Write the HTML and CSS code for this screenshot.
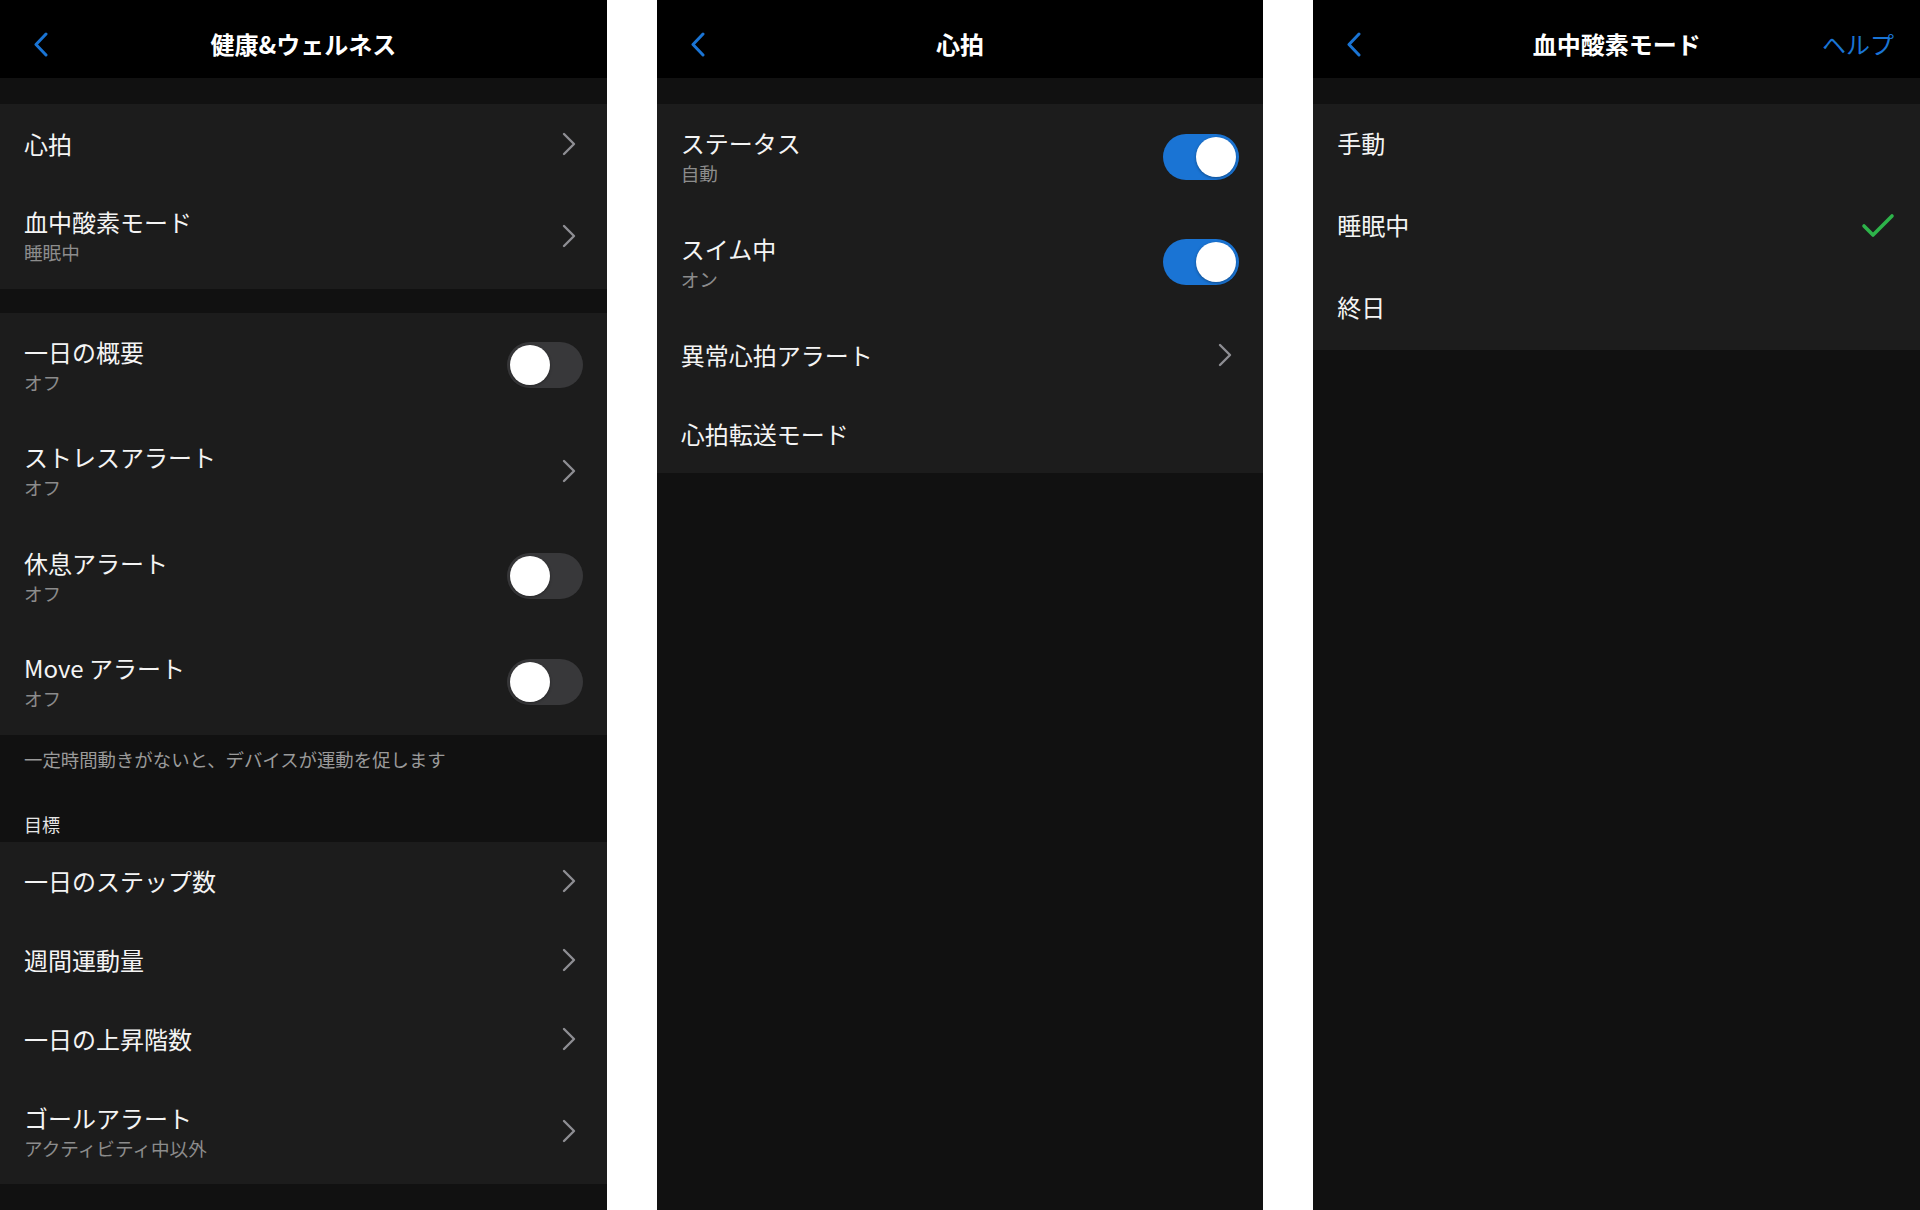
FILE: index.html
```html
<!DOCTYPE html>
<html lang="ja">
<head>
<meta charset="utf-8">
<title>設定</title>
<link rel="stylesheet" href="styles.css">
</head>
<body>
<div class="screens">
  <!-- Panel 1 -->
  <section class="panel">
    <header class="bar">
      <span class="back"><svg width="16" height="25" viewBox="0 0 16 25"><polyline points="13,2 3,12.5 13,23" fill="none" stroke="#1a74d4" stroke-width="3" stroke-linecap="round" stroke-linejoin="round"/></svg></span>
      <h1 class="title">健康&amp;ウェルネス</h1>
      <span class="right"></span>
    </header>
    <div class="spacer"></div>
    <div class="group">
      <div class="row single"><div class="text"><div class="label">心拍</div></div><svg class="chev" width="14" height="24" viewBox="0 0 14 24"><polyline points="2,2 12,12 2,22" fill="none" stroke="#8e8e93" stroke-width="2.4" stroke-linecap="round" stroke-linejoin="round"/></svg></div>
      <div class="row double"><div class="text"><div class="label">血中酸素モード</div><div class="sub">睡眠中</div></div><svg class="chev" width="14" height="24" viewBox="0 0 14 24"><polyline points="2,2 12,12 2,22" fill="none" stroke="#8e8e93" stroke-width="2.4" stroke-linecap="round" stroke-linejoin="round"/></svg></div>
    </div>
    <div class="gap"></div>
    <div class="group">
      <div class="row double"><div class="text"><div class="label">一日の概要</div><div class="sub">オフ</div></div><div class="toggle"><span class="knob"></span></div></div>
      <div class="row double"><div class="text"><div class="label">ストレスアラート</div><div class="sub">オフ</div></div><svg class="chev" width="14" height="24" viewBox="0 0 14 24"><polyline points="2,2 12,12 2,22" fill="none" stroke="#8e8e93" stroke-width="2.4" stroke-linecap="round" stroke-linejoin="round"/></svg></div>
      <div class="row double"><div class="text"><div class="label">休息アラート</div><div class="sub">オフ</div></div><div class="toggle"><span class="knob"></span></div></div>
      <div class="row double"><div class="text"><div class="label">Move アラート</div><div class="sub">オフ</div></div><div class="toggle"><span class="knob"></span></div></div>
    </div>
    <p class="note">一定時間動きがないと、デバイスが運動を促します</p>
    <div class="section-label">目標</div>
    <div class="group">
      <div class="row single"><div class="text"><div class="label">一日のステップ数</div></div><svg class="chev" width="14" height="24" viewBox="0 0 14 24"><polyline points="2,2 12,12 2,22" fill="none" stroke="#8e8e93" stroke-width="2.4" stroke-linecap="round" stroke-linejoin="round"/></svg></div>
      <div class="row single"><div class="text"><div class="label">週間運動量</div></div><svg class="chev" width="14" height="24" viewBox="0 0 14 24"><polyline points="2,2 12,12 2,22" fill="none" stroke="#8e8e93" stroke-width="2.4" stroke-linecap="round" stroke-linejoin="round"/></svg></div>
      <div class="row single"><div class="text"><div class="label">一日の上昇階数</div></div><svg class="chev" width="14" height="24" viewBox="0 0 14 24"><polyline points="2,2 12,12 2,22" fill="none" stroke="#8e8e93" stroke-width="2.4" stroke-linecap="round" stroke-linejoin="round"/></svg></div>
      <div class="row double"><div class="text"><div class="label">ゴールアラート</div><div class="sub">アクティビティ中以外</div></div><svg class="chev" width="14" height="24" viewBox="0 0 14 24"><polyline points="2,2 12,12 2,22" fill="none" stroke="#8e8e93" stroke-width="2.4" stroke-linecap="round" stroke-linejoin="round"/></svg></div>
    </div>
  </section>

  <!-- Panel 2 -->
  <section class="panel">
    <header class="bar">
      <span class="back"><svg width="16" height="25" viewBox="0 0 16 25"><polyline points="13,2 3,12.5 13,23" fill="none" stroke="#1a74d4" stroke-width="3" stroke-linecap="round" stroke-linejoin="round"/></svg></span>
      <h1 class="title">心拍</h1>
      <span class="right"></span>
    </header>
    <div class="spacer"></div>
    <div class="group">
      <div class="row double"><div class="text"><div class="label">ステータス</div><div class="sub">自動</div></div><div class="toggle on"><span class="knob"></span></div></div>
      <div class="row double"><div class="text"><div class="label">スイム中</div><div class="sub">オン</div></div><div class="toggle on"><span class="knob"></span></div></div>
      <div class="row single"><div class="text"><div class="label">異常心拍アラート</div></div><svg class="chev" width="14" height="24" viewBox="0 0 14 24"><polyline points="2,2 12,12 2,22" fill="none" stroke="#8e8e93" stroke-width="2.4" stroke-linecap="round" stroke-linejoin="round"/></svg></div>
      <div class="row single"><div class="text"><div class="label">心拍転送モード</div></div></div>
    </div>
  </section>

  <!-- Panel 3 -->
  <section class="panel">
    <header class="bar">
      <span class="back"><svg width="16" height="25" viewBox="0 0 16 25"><polyline points="13,2 3,12.5 13,23" fill="none" stroke="#1a74d4" stroke-width="3" stroke-linecap="round" stroke-linejoin="round"/></svg></span>
      <h1 class="title">血中酸素モード</h1>
      <span class="right help">ヘルプ</span>
    </header>
    <div class="spacer"></div>
    <div class="group">
      <div class="row option"><div class="text"><div class="label">手動</div></div></div>
      <div class="row option"><div class="text"><div class="label">睡眠中</div></div><svg class="check" width="34" height="28" viewBox="0 0 34 28"><polyline points="3,14 12,23 31,4" fill="none" stroke="#2db34a" stroke-width="3.6" stroke-linecap="round" stroke-linejoin="round"/></svg></div>
      <div class="row option"><div class="text"><div class="label">終日</div></div></div>
    </div>
  </section>
</div>
</body>
</html>
```

FILE: styles.css
```css
html, body {
  margin: 0;
  padding: 0;
  background: #ffffff;
}

body {
  width: 1920px;
  height: 1210px;
  overflow: hidden;
  font-family: "Noto Sans CJK JP", "Noto Sans", sans-serif;
}

.screens {
  display: flex;
  gap: 50px;
  height: 1210px;
}

.panel {
  flex: 1 1 0;
  min-width: 0;
  background: #111111;
  display: flex;
  flex-direction: column;
}

.bar {
  height: 78px;
  box-sizing: border-box;
  background: #000000;
  display: grid;
  grid-template-columns: 1fr auto 1fr;
  align-items: center;
  padding: 10px 26px 0 26px;
  flex: none;
}

.back {
  display: flex;
  align-items: center;
  height: 25px;
  margin-left: 7px;
}

.title {
  margin: 0;
  color: #ffffff;
  font-size: 24px;
  font-weight: 700;
  line-height: 30px;
  white-space: nowrap;
}

.right {
  justify-self: end;
}

.help {
  color: #1a74d4;
  font-size: 24px;
  line-height: 30px;
}

.spacer {
  height: 26px;
  flex: none;
}

.gap {
  height: 24px;
  flex: none;
}

.group {
  background: #1c1c1c;
  flex: none;
}

.row {
  display: flex;
  align-items: center;
  justify-content: space-between;
  padding: 0 24px;
}

.row.single {
  height: 79px;
}

.row.double {
  height: 105.5px;
}

.row.option {
  height: 82px;
  box-sizing: border-box;
  padding-bottom: 4px;
}

.text {
  display: flex;
  flex-direction: column;
  gap: 3px;
}

.label {
  color: #f4f4f4;
  font-size: 24px;
  line-height: 30px;
  white-space: nowrap;
}

.sub {
  color: #8c8c8c;
  font-size: 18.6px;
  line-height: 24px;
  white-space: nowrap;
}

.chev {
  margin-right: 7px;
  flex: none;
}

.check {
  margin-right: 1px;
  margin-top: 2px;
  flex: none;
}

.toggle {
  width: 76px;
  height: 46px;
  border-radius: 23px;
  background: #38383a;
  box-sizing: border-box;
  padding: 3px;
  display: flex;
  justify-content: flex-start;
  align-items: center;
  flex: none;
}

.toggle.on {
  background: #1a74d4;
  justify-content: flex-end;
}

.knob {
  width: 40px;
  height: 40px;
  border-radius: 50%;
  background: #ffffff;
  box-shadow: 0 1px 3px rgba(0, 0, 0, 0.35);
}

.note {
  margin: 0;
  padding: 12px 24px 0;
  color: #9a9a9a;
  font-size: 18.4px;
  line-height: 24px;
  white-space: nowrap;
}

.section-label {
  padding: 41px 24px 6px;
  color: #e6e6e6;
  font-size: 18px;
  line-height: 24px;
}
```
